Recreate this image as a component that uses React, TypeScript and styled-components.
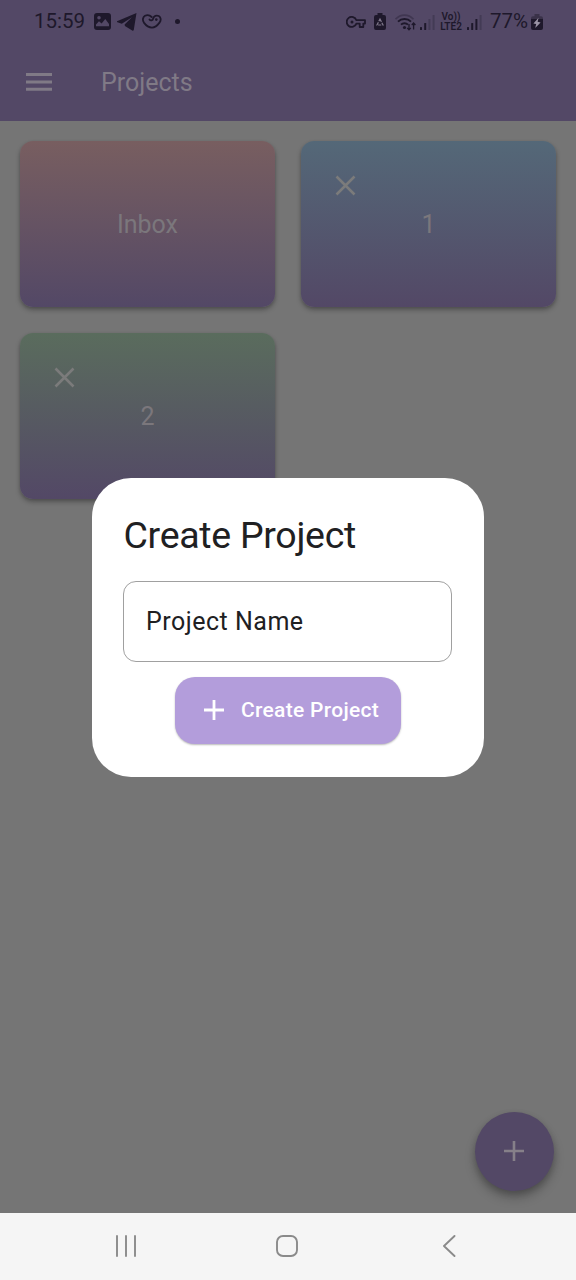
import React from "react";
import styled, { createGlobalStyle } from "styled-components";

const GlobalStyle = createGlobalStyle`
  * { box-sizing: border-box; }
  body { margin: 0; background: #757575; font-family: Roboto, sans-serif; }
  svg { display: block; flex: none; }
  button, input { font-family: inherit; }
`;

const Screen = styled.div`
  position: relative;
  width: 576px;
  height: 1280px;
  display: flex;
  flex-direction: column;
  overflow: hidden;
  background: #757575;
`;

const Header = styled.header`
  height: 121px;
  background: #534866;
`;

const StatusBar = styled.div`
  height: 43px;
  padding: 0 33px 0 34px;
  display: flex;
  align-items: center;
  justify-content: space-between;
  color: #1e182b;
`;

const StatusGroup = styled.div`
  display: flex;
  align-items: center;
`;

const StatusText = styled.span<{ $width: number }>`
  width: ${(p) => p.$width}px;
  margin-top: -1px;
  font-size: 20.5px;
  line-height: 24px;
  white-space: nowrap;
`;

const NetworkLabel = styled.span`
  display: flex;
  flex-direction: column;
  width: 24px;
  margin: 0 4px;
  font-size: 10px;
  line-height: 9.5px;
  font-weight: 600;
  text-align: center;
`;

const Toolbar = styled.div`
  height: 78px;
  padding-left: 26px;
  display: flex;
  align-items: center;
  gap: 49px;
`;

const ToolbarTitle = styled.h1`
  margin: 1px 0 0;
  font-size: 25px;
  line-height: 30px;
  font-weight: 400;
  color: #807a86;
`;

const Body = styled.main`
  flex: 1;
  padding: 20px 20px 22px;
  display: flex;
  flex-direction: column;
  justify-content: space-between;
`;

const Grid = styled.div`
  display: grid;
  grid-template-columns: 255px 255px;
  grid-auto-rows: 166px;
  gap: 26px;
`;

const Card = styled.article<{ $top: string }>`
  display: grid;
  place-items: center;
  border-radius: 13px;
  background: linear-gradient(${(p) => p.$top}, #534866);
  box-shadow: 0 3px 5px rgba(0, 0, 0, 0.28), 0 1px 3px rgba(0, 0, 0, 0.1);
  color: #7b777c;
  font-size: 25px;
  line-height: 30px;

  > * { grid-area: 1 / 1; }
`;

const CardName = styled.span`
  padding-top: 2px;
`;

const CloseButton = styled.button`
  place-self: start;
  margin: 34px 0 0 34px;
  padding: 0;
  border: 0;
  background: none;
  color: #7b7b7b;
`;

const Fab = styled.button`
  align-self: flex-end;
  width: 79px;
  height: 79px;
  margin-right: 2px;
  padding: 0 1px 1px 0;
  display: grid;
  place-items: center;
  border: 0;
  border-radius: 50%;
  background: #534866;
  color: #868089;
  box-shadow: 0 7px 11px rgba(0, 0, 0, 0.22), 0 3px 6px rgba(0, 0, 0, 0.18);
`;

const Overlay = styled.div`
  position: absolute;
  inset: 0 0 25px;
  display: grid;
  place-items: center;
`;

const Dialog = styled.section`
  width: 392px;
  height: 299px;
  padding: 34px 31px 32px;
  display: flex;
  flex-direction: column;
  border-radius: 39px;
  background: #fff;
`;

const DialogTitle = styled.h2`
  margin: 0 0 23px 0.5px;
  font-size: 37.5px;
  line-height: 46px;
  font-weight: 400;
  letter-spacing: -0.3px;
  color: #202022;
`;

const NameInput = styled.input`
  width: 329px;
  height: 81px;
  flex: none;
  padding: 0 22px;
  border: 1.5px solid #a0a0a0;
  border-radius: 13px;
  background: #fff;
  font-size: 25px;
  letter-spacing: 0.5px;

  &::placeholder { color: #202022; opacity: 1; }
`;

const SubmitButton = styled.button`
  align-self: center;
  width: 226px;
  height: 67px;
  flex: none;
  margin-top: 15px;
  padding: 0 0 1px 29px;
  display: flex;
  align-items: center;
  gap: 17px;
  border: 0;
  border-radius: 20px;
  background: #b39ddb;
  box-shadow: 0 1px 2px rgba(0, 0, 0, 0.28);
  color: #fff;
  font-size: 21px;
  font-weight: 500;
  letter-spacing: 0.3px;
  white-space: nowrap;
`;

const SystemNav = styled.nav`
  height: 67px;
  padding: 0 120px 2px 115px;
  display: grid;
  grid-template-columns: 161px 1fr 14px;
  align-items: center;
  background: #f5f5f5;
`;

const Cross = () => (
  <svg width="21" height="21" viewBox="0 0 21 21" fill="none" stroke="currentColor" strokeWidth="2.6">
    <path d="M1.5 1.5l18 18M19.5 1.5l-18 18" />
  </svg>
);

const Plus = ({ weight }: { weight: number }) => (
  <svg width="20" height="20" viewBox="0 0 20 20" fill="none" stroke="currentColor" strokeWidth={weight}>
    <path d="M10 0v20M0 10h20" />
  </svg>
);

const MenuIcon = () => (
  <svg width="26" height="18" viewBox="0 0 26 18" fill="#807a86">
    <path d="M0 0h26v3H0zM0 7.4h26v3H0zM0 14.8h26v3H0z" />
  </svg>
);

const ImageIcon = () => (
  <svg width="17" height="17" viewBox="0 0 17 17">
    <path fill="currentColor" fillRule="evenodd" d="M3 0h11a3 3 0 0 1 3 3v11a3 3 0 0 1-3 3H3a3 3 0 0 1-3-3V3a3 3 0 0 1 3-3zM2 13.2h13V11l-3.7-5-3.7 4.6L5 8.3 2 11.4zM5 3a1.8 1.8 0 1 0 0 3.6A1.8 1.8 0 0 0 5 3z" />
  </svg>
);

const SendIcon = () => (
  <svg width="20" height="18" viewBox="0 0 20 18">
    <path fill="currentColor" d="M19.5 0L0 8.3q-.8.5.4 1l4.4 1.4L15 4.2 7.6 11.6l.3 1.5 7.3 4.5q1.3.6 1.6-.8z" />
  </svg>
);

const HeartIcon = () => (
  <svg width="20" height="16" viewBox="0 0 20 16">
    <path fill="none" stroke="currentColor" strokeWidth="1.8" strokeLinecap="round" d="M7.5 5.4C8.5 7 10.8 6.6 11.2 4.5 11.8 1.8 14.5 1 16.8 2c2.2 1.2 2.5 4.3.7 6.6-1.9 2.6-4.7 5-7.5 5s-6.2-2.4-8.1-5C.2 6.1.8 3.1 3 1.8 5.2.7 7.8 1.2 9.7 3" />
    <circle cx="14.3" cy="5.6" r="1.3" fill="currentColor" />
  </svg>
);

const KeyIcon = () => (
  <svg width="20" height="12" viewBox="0 0 20 12" fill="none" stroke="currentColor">
    <path strokeWidth="1.8" strokeLinejoin="round" d="M10.4 4.2H19v3.4h-1.7V11h-3.6V7.6h-3.3A5 5 0 1 1 10.4 4.2z" />
    <circle cx="6" cy="6" r="1.5" fill="currentColor" stroke="none" />
  </svg>
);

const BatterySaverIcon = () => (
  <svg width="12" height="17" viewBox="0 0 12 17">
    <path fill="currentColor" d="M3.5 0h5v2H10a2 2 0 0 1 2 2v11a2 2 0 0 1-2 2H2a2 2 0 0 1-2-2V4a2 2 0 0 1 2-2h1.5z" />
    <path fill="none" stroke="#81798c" strokeWidth="1.2" strokeDasharray="3.2 1" d="M6 6l3 6H3z" />
  </svg>
);

const WifiIcon = () => (
  <svg width="22" height="18" viewBox="0 0 22 18" fill="none" stroke="currentColor">
    <path strokeWidth="1.7" opacity="0.35" d="M.5 6.2C5.5.7 13.5.7 18.5 6.2" />
    <path strokeWidth="1.9" d="M3 8.7c3.6-3.7 9.4-3.7 13 0M6 11.7c2-2 5-2 7 0" />
    <circle cx="9.5" cy="14.5" r="1.6" fill="currentColor" stroke="none" />
    <path strokeWidth="1.3" d="M14 11v5.8M12.2 14.9l1.8 2 1.8-2M18.6 16.4V10M16.8 12l1.8-2 1.8 2" />
  </svg>
);

const SignalIcon = ({ bars }: { bars: number }) => (
  <svg width="15" height="16" viewBox="0 0 15 16" fill="currentColor">
    {[3, 7, 11, 15].map((h, i) => (
      <rect key={h} x={i * 4.2} y={16 - h} width="2" height={h} rx="0.6" opacity={i < bars ? 1 : 0.28} />
    ))}
  </svg>
);

const ChargingIcon = () => (
  <svg width="12" height="16" viewBox="0 0 12 16">
    <path fill="#3a3249" d="M3.5 0h5v2.2H10a2 2 0 0 1 2 2V6H0V4.2a2 2 0 0 1 2-2h1.5z" />
    <path fill="currentColor" d="M0 5h12v9a2 2 0 0 1-2 2H2a2 2 0 0 1-2-2z" />
    <path fill="#9a93a5" d="M7.6 3.8L2.4 9.5l2.8.6-1 3.9 5.4-5.5-3-.8z" />
  </svg>
);

const Space = styled.span<{ $w: number }>`
  width: ${(p) => p.$w}px;
`;

const projects = [
  { name: "Inbox", top: "#785e60", closable: false },
  { name: "1", top: "#546878", closable: true },
  { name: "2", top: "#5a6c5d", closable: true },
];

export default function App() {
  return (
    <Screen>
      <GlobalStyle />
      <Header>
        <StatusBar>
          <StatusGroup>
            <StatusText $width={60}>15:59</StatusText>
            <ImageIcon />
            <Space $w={6} />
            <SendIcon />
            <Space $w={5} />
            <HeartIcon />
            <Space $w={13} />
            <svg width="5" height="5" viewBox="0 0 5 5"><circle cx="2.5" cy="2.5" r="2.5" fill="currentColor" /></svg>
          </StatusGroup>
          <StatusGroup>
            <KeyIcon />
            <Space $w={8} />
            <BatterySaverIcon />
            <Space $w={9} />
            <WifiIcon />
            <Space $w={3} />
            <SignalIcon bars={2} />
            <NetworkLabel><span>Vo))</span><span>LTE2</span></NetworkLabel>
            <SignalIcon bars={3} />
            <Space $w={8} />
            <StatusText $width={41}>77%</StatusText>
            <ChargingIcon />
          </StatusGroup>
        </StatusBar>
        <Toolbar>
          <MenuIcon />
          <ToolbarTitle>Projects</ToolbarTitle>
        </Toolbar>
      </Header>
      <Body>
        <Grid>
          {projects.map((p) => (
            <Card key={p.name} $top={p.top}>
              <CardName>{p.name}</CardName>
              {p.closable && <CloseButton aria-label="Delete project"><Cross /></CloseButton>}
            </Card>
          ))}
        </Grid>
        <Fab aria-label="Add project"><Plus weight={2.6} /></Fab>
      </Body>
      <SystemNav>
        <svg width="22" height="22" viewBox="0 0 22 22" stroke="#8a8a8a" strokeWidth="1.9" strokeLinecap="round">
          <path d="M2 1v20M11 1v20M20 1v20" />
        </svg>
        <svg width="22" height="22" viewBox="0 0 22 22" fill="none" stroke="#8a8a8a" strokeWidth="1.9">
          <rect x="1" y="1" width="20" height="20" rx="6" />
        </svg>
        <svg width="14" height="22" viewBox="0 0 14 22" fill="none" stroke="#8a8a8a" strokeWidth="1.9" strokeLinecap="round" strokeLinejoin="round">
          <path d="M12.5 1L2 11l10.5 10" />
        </svg>
      </SystemNav>
      <Overlay>
        <Dialog role="dialog" aria-label="Create Project">
          <DialogTitle>Create Project</DialogTitle>
          <NameInput placeholder="Project Name" />
          <SubmitButton>
            <Plus weight={2.8} />
            <span>Create Project</span>
          </SubmitButton>
        </Dialog>
      </Overlay>
    </Screen>
  );
}
